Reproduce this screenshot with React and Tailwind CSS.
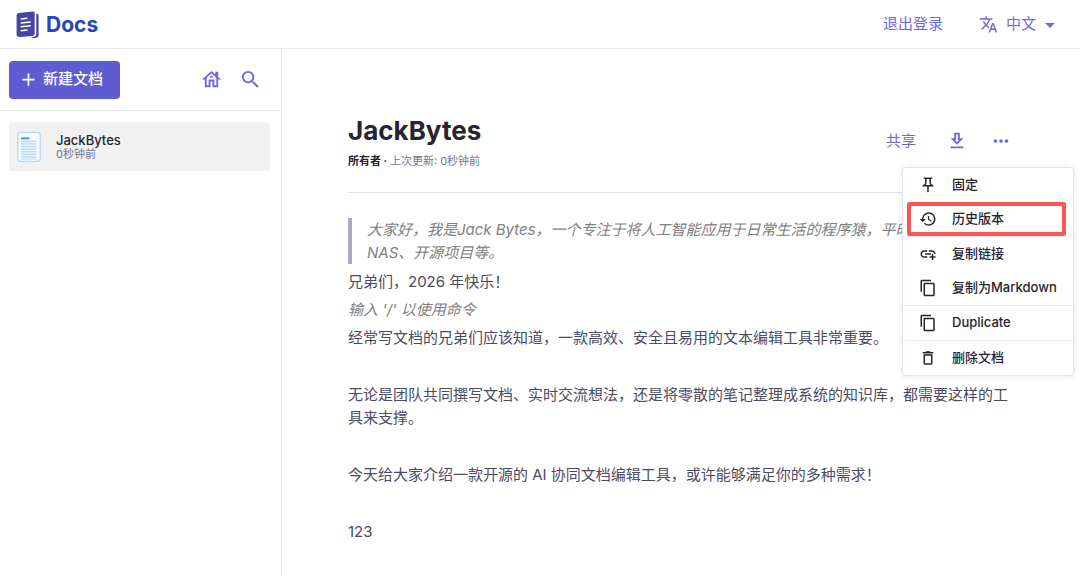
import {
  MdAdd,
  MdAddLink,
  MdArrowDropDown,
  MdContentCopy,
  MdDeleteOutline,
  MdHistory,
  MdMoreHoriz,
  MdOutlineDownload,
  MdOutlineHouse,
  MdOutlinePushPin,
  MdSearch,
  MdTranslate,
} from "react-icons/md";

const menuGroups = [
  [
    { label: "固定", Icon: MdOutlinePushPin },
    { label: "历史版本", Icon: MdHistory, marked: true },
  ],
  [
    { label: "复制链接", Icon: MdAddLink },
    { label: "复制为Markdown", Icon: MdContentCopy },
  ],
  [{ label: "Duplicate", Icon: MdContentCopy }],
  [{ label: "删除文档", Icon: MdDeleteOutline }],
];

function Logo() {
  return (
    <svg width="24" height="28" viewBox="0 0 24 28" aria-hidden="true">
      <path
        d="M20.3 2.4 L21.6 2.9 Q22.6 3.3 22.6 4.4 V24 Q22.6 26.4 20.3 26.8 L17 27.2 L15 26.3 L18.2 25.7 Q20.3 25.2 20.3 23 Z"
        fill="#4844a4"
      />
      <path
        d="M2.6 2.1 L16.6 0.4 Q18.7 0.3 18.7 2.4 V22.6 Q18.7 24.5 16.8 24.9 L3.6 25.9 Q0.6 26 0.6 23.2 V4.4 Q0.6 2.4 2.6 2.1 Z"
        fill="#4844a4"
      />
      <g stroke="#fff" strokeWidth="1.5" strokeLinecap="round">
        <path d="M5.2 8 L11 7.2" />
        <path d="M5.2 11.9 L14.2 10.9" />
        <path d="M5.2 15.8 L14.2 14.8" />
        <path d="M5.2 19.7 L11 18.9" />
      </g>
    </svg>
  );
}

function DocThumb() {
  return (
    <svg width="24" height="32" viewBox="0 0 24 32" className="shrink-0" aria-hidden="true">
      <rect x="0.8" y="1.3" width="22.4" height="29" rx="2.6" fill="#f6fbff" stroke="#b5dafa" strokeWidth="1.3" />
      <rect x="4" y="6.6" width="8.4" height="1.6" rx="0.5" fill="#2b93e8" />
      <g fill="#b9d9f5">
        <rect x="4" y="9.6" width="15.4" height="1.5" />
        <rect x="4" y="12.2" width="15.4" height="1.5" />
        <rect x="4" y="14.8" width="15.4" height="1.5" />
        <rect x="4" y="17.4" width="15.4" height="1.5" />
        <rect x="4" y="20" width="15.4" height="1.5" />
        <rect x="4" y="22.6" width="15.4" height="1.5" />
        <rect x="4" y="25.2" width="15.4" height="1.5" />
        <rect x="4" y="27.6" width="15.4" height="1" />
      </g>
    </svg>
  );
}

function Header() {
  return (
    <header className="flex h-[49px] items-center justify-between border-b border-[#e5e5ee] pt-px pr-[18px] pl-4">
      <a href="#home" className="flex items-center gap-[6px] text-[21px] leading-7 font-bold text-[#2845c1]">
        <Logo />
        <span>Docs</span>
      </a>
      <div className="flex items-center gap-9 text-[15px] text-[#6a6ae0]">
        <button type="button">退出登录</button>
        <button type="button" className="flex items-center">
          <MdTranslate size={19} />
          <span className="pr-[2px] pl-2">中文</span>
          <MdArrowDropDown size={24} />
        </button>
      </div>
    </header>
  );
}

function Sidebar() {
  return (
    <aside className="w-[282px] shrink-0 border-r border-[#e5e5ee]">
      <div className="flex h-[62px] items-center justify-between border-b border-[#e5e5ee] pr-[19px] pl-[9px]">
        <button
          type="button"
          className="flex h-[38px] items-center gap-1 rounded bg-[#5e5cd0] pr-[17px] pl-[9px] text-[15px] font-medium text-white"
        >
          <MdAdd size={21} />
          新建文档
        </button>
        <div className="flex gap-4 text-[#6a6ae0]">
          <button type="button" aria-label="首页">
            <MdOutlineHouse size={23} />
          </button>
          <button type="button" aria-label="搜索">
            <MdSearch size={23} />
          </button>
        </div>
      </div>
      <nav className="py-[11px] pr-[11px] pl-[9px]">
        <a href="#jackbytes" className="flex h-[49px] items-center gap-[15px] rounded bg-[#f1f1f1] pl-2">
          <DocThumb />
          <span className="flex flex-col">
            <span className="text-[13px] leading-[14px] font-medium text-[#25252f]">JackBytes</span>
            <span className="text-[11px] leading-[14px] text-[#75758a]">0秒钟前</span>
          </span>
        </a>
      </nav>
    </aside>
  );
}

function OptionsMenu() {
  return (
    <div
      role="menu"
      className="absolute top-full right-0 w-[172px] divide-y divide-[#eaeaf2] rounded border border-[#e5e5ef] bg-white shadow-[0_0_6px_rgba(80,80,160,0.14)]"
    >
      {menuGroups.map((group) => (
        <div key={group[0].label}>
          {group.map(({ label, Icon, marked }) => (
            <button
              key={label}
              type="button"
              role="menuitem"
              className="relative flex h-[34px] w-full items-center gap-[15px] pl-4 text-[13px] font-medium whitespace-nowrap text-[#25252f]"
            >
              <Icon size={18} className="shrink-0" />
              {label}
              {marked && (
                <span className="absolute top-0 right-[7px] bottom-0 left-1 z-10 rounded-xs border-4 border-[#fb5555]" />
              )}
            </button>
          ))}
        </div>
      ))}
    </div>
  );
}

function Block({ children }) {
  return <p className="pt-[3px] pb-[2px]">{children}</p>;
}

function EmptyBlock() {
  return <div className="h-[29px]" />;
}

export default function App() {
  return (
    <div className="flex min-h-screen flex-col bg-white font-['Inter','Noto_Sans_CJK_SC',sans-serif]">
      <Header />
      <div className="flex flex-1">
        <Sidebar />
        <main className="min-w-0 flex-1 px-[66px] pt-[66px]">
          <div className="flex items-start justify-between border-b border-[#e2e2e8] pb-[23px]">
            <div>
              <h1 className="text-[26px] leading-8 font-bold text-[#25252f]">JackBytes</h1>
              <p className="mt-[7px] text-[11px] leading-[15px] text-[#75758a]">
                <strong className="font-bold text-[#25252f]">所有者 · </strong>
                上次更新: 0秒钟前
              </p>
            </div>
            <div className="relative -mr-[60px] flex h-[52px] items-center pr-[62px] text-[15px] text-[#6a6ae0]">
              <button type="button" className="mr-[30px]">
                共享
              </button>
              <button type="button" aria-label="下载" className="mr-[22px]">
                <MdOutlineDownload size={22} />
              </button>
              <button type="button" aria-label="更多选项">
                <MdMoreHoriz size={22} />
              </button>
              <OptionsMenu />
            </div>
          </div>
          <article className="pt-[25px] text-[15px] leading-[23px] text-[#4b4b61]">
            <blockquote className="mb-[3px] border-l-4 border-[#aaaac4] pl-[15px] text-[#808080] italic">
              大家好，我是Jack Bytes，一个专注于将人工智能应用于日常生活的程序猿，平时
              <br />
              NAS、开源项目等。
            </blockquote>
            <Block>兄弟们，2026 年快乐！</Block>
            <Block>
              <em className="text-[#808080]">输入 '/' 以使用命令</em>
            </Block>
            <Block>经常写文档的兄弟们应该知道，一款高效、安全且易用的文本编辑工具非常重要。</Block>
            <EmptyBlock />
            <Block>
              无论是团队共同撰写文档、实时交流想法，还是将零散的笔记整理成系统的知识库，都需要这样的工具来支撑。
            </Block>
            <EmptyBlock />
            <Block>今天给大家介绍一款开源的 AI 协同文档编辑工具，或许能够满足你的多种需求！</Block>
            <EmptyBlock />
            <Block>123</Block>
          </article>
        </main>
      </div>
    </div>
  );
}
